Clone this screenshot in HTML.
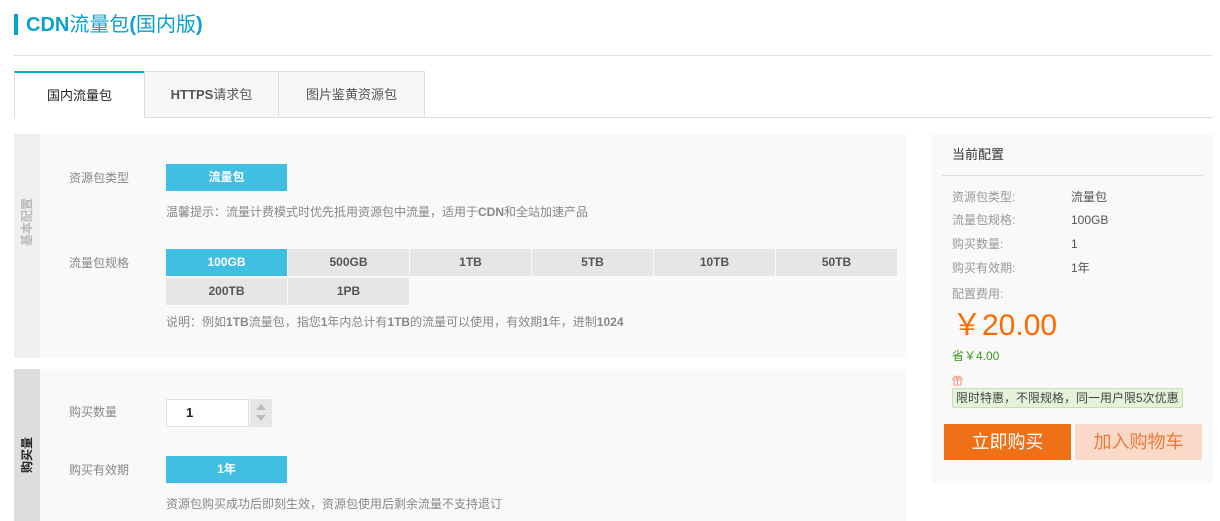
<!DOCTYPE html>
<html><head><meta charset="utf-8"><style>
*{margin:0;padding:0;box-sizing:border-box}
body{width:1220px;height:521px;background:#fff;position:relative;overflow:hidden;font-family:"Liberation Sans","Noto Sans CJK SC",sans-serif;font-size:12px;color:#666}
.a{position:absolute}
.t{white-space:nowrap;line-height:14px}
.btn{position:absolute;background:#41bfe3;color:#fff;font-weight:bold;text-align:center;font-size:12px}
.cell{position:absolute;width:121px;height:27px;line-height:27px;background:#e6e6e6;color:#555;font-weight:bold;text-align:center;font-size:12px}
.lbl{color:#888}
.rl{position:absolute;left:952px;color:#999;font-size:12px;line-height:14px}
.rv{position:absolute;left:1071px;color:#555;font-size:12px;line-height:14px}
.vt{position:absolute;width:80px;height:16px;line-height:16px;text-align:center;font-weight:bold;font-size:12px;transform:rotate(-90deg);white-space:nowrap}
</style></head><body>
<div class="a" style="left:14px;top:14px;width:4px;height:21px;background:#0aa0cf"></div>
<div class="a t" style="left:26px;top:12px;font-size:20px;line-height:26px;color:#0aa0cf;font-weight:bold">CDN<span style="font-weight:normal">流量包</span>(<span style="font-weight:normal">国内版</span>)</div>
<div class="a" style="left:14px;top:55px;width:1199px;height:1px;background:#e2e2e2"></div>
<div class="a" style="left:14px;top:117px;width:1199px;height:1px;background:#ddd"></div>
<div class="a" style="left:14px;top:71px;width:130px;height:47px;background:#fff;border-left:1px solid #ddd;border-top:2px solid #0aa0cf;text-align:center;line-height:45px;font-size:13px;color:#222">国内流量包</div>
<div class="a" style="left:144px;top:71px;width:135px;height:47px;background:#f7f7f7;border:1px solid #ddd;text-align:center;line-height:45px;font-size:13px;color:#555;font-weight:bold">HTTPS<span style="font-weight:normal">请求包</span></div>
<div class="a" style="left:279px;top:71px;width:146px;height:47px;background:#f7f7f7;border:1px solid #ddd;border-left:0;text-align:center;line-height:45px;font-size:13px;color:#555">图片鉴黄资源包</div>

<div class="a" style="left:14px;top:134px;width:893px;height:224px;background:#f9f9f9"></div>
<div class="a" style="left:14px;top:134px;width:26px;height:224px;background:#f0f0f0"></div>
<div class="vt" style="left:-13px;top:214px;color:#bbb">基本配置</div>
<div class="a t lbl" style="left:69px;top:171px">资源包类型</div>
<div class="btn" style="left:166px;top:164px;width:121px;height:27px;line-height:27px">流量包</div>
<div class="a t lbl" style="left:166px;top:205px">温馨提示：流量计费模式时优先抵用资源包中流量，适用于<b>CDN</b>和全站加速产品</div>
<div class="a t lbl" style="left:69px;top:256px">流量包规格</div>
<div class="cell" style="left:166px;top:249px;background:#41bfe3;color:#fff">100GB</div>
<div class="cell" style="left:288px;top:249px">500GB</div>
<div class="cell" style="left:410px;top:249px">1TB</div>
<div class="cell" style="left:532px;top:249px">5TB</div>
<div class="cell" style="left:654px;top:249px">10TB</div>
<div class="cell" style="left:776px;top:249px">50TB</div>
<div class="cell" style="left:166px;top:278px">200TB</div>
<div class="cell" style="left:288px;top:278px">1PB</div>
<div class="a t lbl" style="left:166px;top:315px">说明：例如<b>1TB</b>流量包，指您<b>1</b>年内总计有<b>1TB</b>的流量可以使用，有效期<b>1</b>年，进制<b>1024</b></div>

<div class="a" style="left:14px;top:369px;width:893px;height:152px;background:#f9f9f9"></div>
<div class="a" style="left:14px;top:369px;width:26px;height:152px;background:#ddd"></div>
<div class="vt" style="left:-13px;top:447px;color:#222">购买量</div>
<div class="a t lbl" style="left:69px;top:405px">购买数量</div>
<div class="a" style="left:166px;top:399px;width:83px;height:28px;background:#fff;border:1px solid #e2e2e2;font-weight:bold;color:#222;line-height:26px;padding-left:19px;font-size:13px">1</div>
<div class="a" style="left:250px;top:399px;width:22px;height:28px;background:#e6e6e6"></div>
<div class="a" style="left:256px;top:404px;width:0;height:0;border-left:5px solid transparent;border-right:5px solid transparent;border-bottom:6px solid #bbb"></div>
<div class="a" style="left:256px;top:415px;width:0;height:0;border-left:5px solid transparent;border-right:5px solid transparent;border-top:6px solid #bbb"></div>
<div class="a t lbl" style="left:69px;top:463px">购买有效期</div>
<div class="btn" style="left:166px;top:456px;width:121px;height:27px;line-height:27px">1年</div>
<div class="a t lbl" style="left:166px;top:497px">资源包购买成功后即刻生效，资源包使用后剩余流量不支持退订</div>

<div class="a" style="left:932px;top:134px;width:281px;height:349px;background:#f9f9f9"></div>
<div class="a t" style="left:952px;top:148px;color:#333;font-size:13px">当前配置</div>
<div class="a" style="left:942px;top:175px;width:261px;height:1px;background:#ddd"></div>
<div class="rl" style="top:190px">资源包类型:</div><div class="rv" style="top:190px">流量包</div>
<div class="rl" style="top:213px">流量包规格:</div><div class="rv" style="top:213px">100GB</div>
<div class="rl" style="top:237px">购买数量:</div><div class="rv" style="top:237px">1</div>
<div class="rl" style="top:261px">购买有效期:</div><div class="rv" style="top:261px">1年</div>
<div class="rl" style="top:287px">配置费用:</div>
<div class="a t" style="left:952px;top:309px;font-size:30px;line-height:34px;color:#ff6a00">￥20.00</div>
<div class="a t" style="left:952px;top:349px;color:#3a9a1a">省￥4.00</div>
<svg class="a" style="left:952px;top:375px" width="11" height="11" viewBox="0 0 11 11"><rect x="1" y="3" width="9" height="2" fill="none" stroke="#f49a8a"/><rect x="2" y="5" width="7" height="5" fill="none" stroke="#f49a8a"/><path d="M5.5 3V10M5.5 3C4 0 2 1 3 3M5.5 3C7 0 9 1 8 3" fill="none" stroke="#f49a8a"/></svg>
<div class="a" style="left:952px;top:388px;width:231px;height:20px;background:#e5f2d9;border:1px solid #c8e0b3;border-radius:2px;color:#444;line-height:18px;padding-left:3px;white-space:nowrap">限时特惠，不限规格，同一用户限5次优惠</div>
<div class="a" style="left:944px;top:424px;width:127px;height:36px;background:#f07018;color:#fff;font-size:18px;text-align:center;line-height:36px">立即购买</div>
<div class="a" style="left:1075px;top:424px;width:127px;height:36px;background:#fad9c8;color:#f07a3a;font-size:18px;text-align:center;line-height:36px">加入购物车</div>
</body></html>
